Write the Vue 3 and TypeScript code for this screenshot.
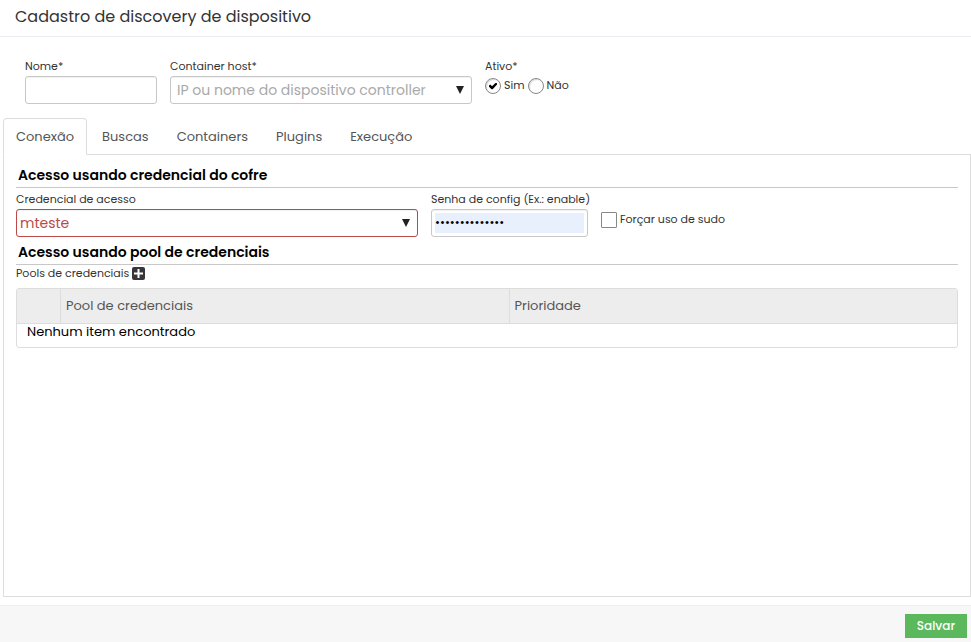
<script setup lang="ts">
import { ref } from 'vue'

const tabs: string[] = ['Conexão', 'Buscas', 'Containers', 'Plugins', 'Execução']
const activeTab = ref('Conexão')
const nome = ref('')
const host = ref('')
const ativo = ref('sim')
const credencial = ref('mteste')
const senha = ref('configenable10')
const sudo = ref(false)
</script>

<template>
  <form class="page" @submit.prevent>
    <header class="page-header">
      <h1>Cadastro de discovery de dispositivo</h1>
    </header>

    <section class="general">
      <div class="field field-name">
        <label for="nome">Nome*</label>
        <input id="nome" v-model="nome" class="control" type="text" />
      </div>
      <div class="field field-host">
        <label for="host">Container host*</label>
        <div class="combo">
          <select id="host" v-model="host" class="control placeholder">
            <option value="" disabled>IP ou nome do dispositivo controller</option>
          </select>
          <svg class="arrow" viewBox="0 0 8 8" aria-hidden="true"><path d="M0 0h8L4 8z" /></svg>
        </div>
      </div>
      <fieldset class="field active-group">
        <legend>Ativo*</legend>
        <div class="radios">
          <label><input v-model="ativo" type="radio" name="ativo" value="sim" /><span>Sim</span></label>
          <label><input v-model="ativo" type="radio" name="ativo" value="nao" /><span>Não</span></label>
        </div>
      </fieldset>
    </section>

    <nav class="tabs" role="tablist">
      <button
        v-for="tab in tabs"
        :key="tab"
        type="button"
        role="tab"
        :aria-selected="tab === activeTab"
        :class="['tab', { selected: tab === activeTab }]"
        @click="activeTab = tab"
      >
        {{ tab }}
      </button>
    </nav>

    <main class="panel">
      <h2>Acesso usando credencial do cofre</h2>
      <div class="access">
        <div class="field field-credential">
          <label for="credencial">Credencial de acesso</label>
          <div class="combo">
            <select id="credencial" v-model="credencial" class="control invalid">
              <option value="mteste">mteste</option>
            </select>
            <svg class="arrow" viewBox="0 0 8 8" aria-hidden="true"><path d="M0 0h8L4 8z" /></svg>
          </div>
        </div>
        <div class="field field-password">
          <label for="senha">Senha de config (Ex.: enable)</label>
          <input id="senha" v-model="senha" class="control filled" type="password" />
        </div>
        <label class="sudo"><input v-model="sudo" type="checkbox" /><span>Forçar uso de sudo</span></label>
      </div>

      <h2>Acesso usando pool de credenciais</h2>
      <div class="pool-title">
        <span>Pools de credenciais</span>
        <button type="button" class="add" aria-label="Adicionar">
          <svg viewBox="0 0 13 13" aria-hidden="true">
            <rect width="13" height="13" rx="2" fill="#36363c" />
            <path d="M6.5 2v9M2 6.5h9" stroke="#fff" stroke-width="2" />
          </svg>
        </button>
      </div>
      <table class="pools">
        <thead>
          <tr>
            <th class="select-col"></th>
            <th>Pool de credenciais</th>
            <th>Prioridade</th>
          </tr>
        </thead>
        <tbody>
          <tr>
            <td colspan="3">Nenhum item encontrado</td>
          </tr>
        </tbody>
      </table>
    </main>

    <footer class="page-footer">
      <button type="submit" class="save">Salvar</button>
    </footer>
  </form>
</template>

<style>
body {
  background: #fff;
}
</style>

<style scoped>
.page,
.page * {
  box-sizing: border-box;
}
.page {
  display: flex;
  flex-direction: column;
  min-height: 100vh;
  color: #333;
  font-family: Poppins, Inter, sans-serif;
  font-size: 11px;
  line-height: 16px;
}
button,
input,
select {
  font-family: inherit;
}
.page-header {
  height: 37px;
  padding: 5px 15px;
  border-bottom: 1px solid #ebebf2;
}
h1 {
  margin: 0;
  font-size: 16px;
  font-weight: 400;
  line-height: 24px;
}
.general {
  display: flex;
  gap: 13px;
  padding: 21px 25px 14px;
}
.field {
  display: flex;
  flex-direction: column;
  gap: 2px;
}
.field-name {
  flex: 0 1 132px;
}
.field-host {
  flex: 0 1 302px;
}
.control {
  width: 100%;
  height: 28px;
  margin: 0;
  padding: 3px;
  border: 1px solid #c8c8c8;
  border-radius: 3px;
  background: #fff;
  box-shadow: inset 0 1px 1px rgba(0, 0, 0, 0.06);
  color: #333;
  font-size: 14px;
  outline: none;
}
select.control {
  appearance: none;
}
.control.placeholder {
  padding-left: 6px;
  color: #a9a9a9;
}
.control.invalid {
  border-color: #b94a48;
  color: #b94a48;
}
.control.filled {
  background: #e8f0fe content-box;
  color: #000;
  font-size: 12px;
}
.combo {
  position: relative;
}
.arrow {
  position: absolute;
  top: 10px;
  right: 8px;
  width: 8px;
  height: 8px;
  fill: #222;
  pointer-events: none;
}
.active-group {
  margin: 0;
  padding: 0;
  border: 0;
}
legend {
  padding: 0;
}
.radios {
  display: flex;
  gap: 3px;
  padding-top: 4px;
}
.radios label,
.sudo {
  display: flex;
  gap: 3px;
}
.radios span,
.sudo span {
  line-height: 14px;
}
input[type='radio'],
input[type='checkbox'] {
  appearance: none;
  flex: none;
  display: grid;
  place-items: center;
  width: 16px;
  height: 16px;
  margin: 0;
  border: 1px solid #888;
  border-radius: 1px;
  background: #fff;
}
input[type='radio'] {
  border-radius: 50%;
  box-shadow: inset 1px 1px 1px rgba(0, 0, 0, 0.15);
}
input:checked::after {
  content: '';
  width: 8px;
  height: 7px;
  background: #000;
  clip-path: polygon(0 44%, 16% 30%, 38% 54%, 84% 4%, 100% 12%, 100% 30%, 46% 96%, 32% 96%, 0 60%);
}
.tabs {
  position: relative;
  display: flex;
  gap: 2px;
  margin: 0 0 -1px 3px;
}
.tab {
  height: 37px;
  padding: 0 12px;
  border: 1px solid transparent;
  border-radius: 4px 4px 0 0;
  background: none;
  color: #555;
  font-size: 13px;
}
.tab.selected {
  border-color: #ddd #ddd #fff;
  background: #fff;
}
.panel {
  flex: 1;
  margin: 0 0 8px 3px;
  padding: 10px 12px;
  border: 1px solid #ddd;
}
h2 {
  margin: 0;
  padding: 0 2px 2px;
  border-bottom: 1px solid #c8c8c8;
  color: #000;
  font-size: 14px;
  font-weight: 600;
  line-height: 20px;
}
.access {
  display: flex;
  gap: 13px;
  padding: 3px 0 5px;
}
.field-credential {
  flex: 0 1 402px;
}
.field-password {
  flex: 0 0 157px;
  min-width: 0;
  white-space: nowrap;
}
.sudo {
  padding-top: 21px;
}
.pool-title {
  display: flex;
  align-items: center;
  gap: 3px;
  margin-bottom: 7px;
}
.add {
  width: 13px;
  height: 13px;
  padding: 0;
  border: 0;
  background: none;
}
.add svg {
  display: block;
}
.pools {
  width: 100%;
  border: 1px solid #ddd;
  border-radius: 3px;
  border-spacing: 0;
  table-layout: fixed;
  overflow: hidden;
  color: #000;
  font-size: 13px;
}
.pools th {
  height: 35px;
  padding: 0 5px;
  border-bottom: 1px solid #ddd;
  background: #ededed;
  color: #555;
  font-weight: 400;
  text-align: left;
}
.pools th + th {
  border-left: 1px solid #ddd;
}
.pools .select-col {
  width: 43px;
}
.pools td {
  padding: 0 10px 7px;
}
.page-footer {
  display: flex;
  justify-content: flex-end;
  height: 37px;
  padding: 8px 4px 4px;
  border-top: 1px solid #eee;
  background: #f7f7f7;
}
.save {
  height: 24px;
  padding: 0 12px;
  border: 0;
  background: #5cb85c;
  color: #fff;
  font-size: 12px;
  font-weight: 500;
}
</style>
